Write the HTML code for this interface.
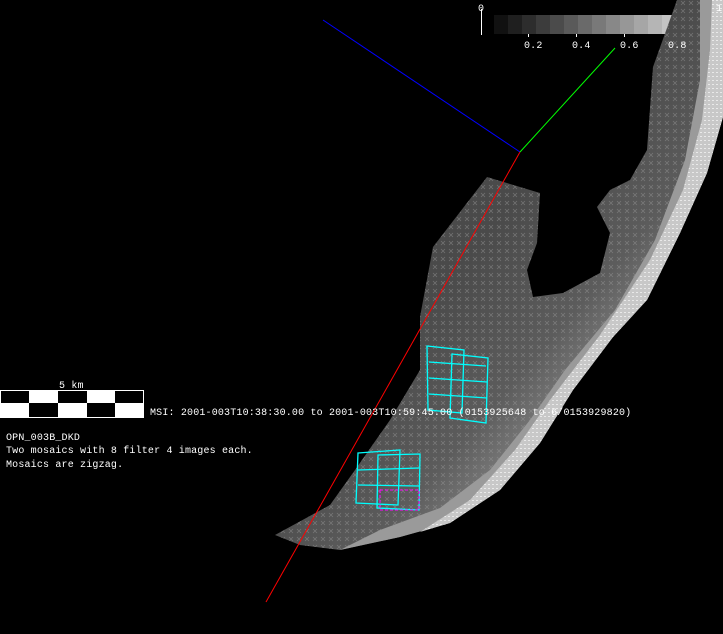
<!DOCTYPE html>
<html><head><style>
html,body{margin:0;padding:0;background:#000;width:723px;height:634px;overflow:hidden}
svg{position:absolute;left:0;top:0}
text{font-family:"Liberation Mono","DejaVu Sans Mono",monospace;fill:#fff;letter-spacing:0.17px}
</style></head><body>
<svg width="723" height="634" viewBox="0 0 723 634">
<defs>
<linearGradient id="ast" x1="470" y1="250" x2="620" y2="380" gradientUnits="userSpaceOnUse">
<stop offset="0" stop-color="#4a4a4a"/><stop offset="0.6" stop-color="#5c5c5c"/><stop offset="1" stop-color="#8a8a8a"/></linearGradient>
<pattern id="tex" width="8" height="8" patternUnits="userSpaceOnUse">
<path d="M1,1 L5,5 M5,1 L1,5" stroke="#9a9a9a" stroke-width="0.8" opacity="0.5"/>
</pattern>
<pattern id="tex2" width="4" height="4" patternUnits="userSpaceOnUse">
<rect x="0" y="0" width="2" height="1" fill="#fff" opacity="0.6"/>
</pattern>
</defs>
<g>
<rect x="494" y="15" width="14" height="19" fill="#111"/>
<rect x="508" y="15" width="14" height="19" fill="#1f1f1f"/>
<rect x="522" y="15" width="14" height="19" fill="#2d2d2d"/>
<rect x="536" y="15" width="14" height="19" fill="#3c3c3c"/>
<rect x="550" y="15" width="14" height="19" fill="#4b4b4b"/>
<rect x="564" y="15" width="14" height="19" fill="#5a5a5a"/>
<rect x="578" y="15" width="14" height="19" fill="#6a6a6a"/>
<rect x="592" y="15" width="14" height="19" fill="#797979"/>
<rect x="606" y="15" width="14" height="19" fill="#888"/>
<rect x="620" y="15" width="14" height="19" fill="#979797"/>
<rect x="634" y="15" width="14" height="19" fill="#a6a6a6"/>
<rect x="648" y="15" width="14" height="19" fill="#b5b5b5"/>
<rect x="662" y="15" width="14" height="19" fill="#c4c4c4"/>
<rect x="676" y="15" width="14" height="19" fill="#d3d3d3"/>
<rect x="690" y="15" width="14" height="19" fill="#e2e2e2"/>
<rect x="704" y="15" width="15" height="19" fill="#f0f0f0"/>
</g>
<line x1="481.5" y1="9" x2="481.5" y2="35" stroke="#fff"/>
<g stroke="#fff"><line x1="528.5" y1="34" x2="528.5" y2="37"/><line x1="576.5" y1="34" x2="576.5" y2="37"/><line x1="624.5" y1="34" x2="624.5" y2="37"/><line x1="672.5" y1="34" x2="672.5" y2="37"/></g>
<text x="478" y="11" font-size="10">0</text>
<text x="524" y="48" font-size="10">0.2</text>
<text x="572" y="48" font-size="10">0.4</text>
<text x="620" y="48" font-size="10">0.6</text>
<path d="M677,0 L723,0 L723,117 L707,173 L680,233 L647,300 L613,337 L573,390 L540,443 L500,490 L450,523 L400,537 L340,550 L300,545 L275,535 L330,505 L355,470 L390,420 L420,370 L420,317 L433,247 L487,177 L540,193 L537,243 L527,270 L533,297 L563,293 L600,273 L610,233 L597,207 L610,190 L630,180 L647,150 L653,67 Z" fill="url(#ast)"/>
<path d="M677,0 L723,0 L723,117 L707,173 L680,233 L647,300 L613,337 L573,390 L540,443 L500,490 L450,523 L400,537 L340,550 L300,545 L275,535 L330,505 L355,470 L390,420 L420,370 L420,317 L433,247 L487,177 L540,193 L537,243 L527,270 L533,297 L563,293 L600,273 L610,233 L597,207 L610,190 L630,180 L647,150 L653,67 Z" fill="url(#tex)"/>
<path d="M700,0 L723,0 L723,117 L707,173 L680,233 L647,300 L613,337 L573,390 L540,443 L500,490 L450,523 L400,537 L340,550 L380,530 L440,508 L490,470 L530,420 L565,370 L615,310 L655,240 L685,160 L700,80 Z" fill="#9a9a9a"/>
<path d="M712,0 L723,0 L723,117 L707,173 L680,233 L647,300 L613,337 L573,390 L540,443 L500,490 L450,523 L420,532 L470,500 L515,450 L550,400 L600,335 L650,260 L683,190 L702,120 L710,50 Z" fill="#c8c8c8"/>
<path d="M712,0 L723,0 L723,117 L707,173 L680,233 L647,300 L613,337 L573,390 L540,443 L500,490 L450,523 L420,532 L470,500 L515,450 L550,400 L600,335 L650,260 L683,190 L702,120 L710,50 Z" fill="url(#tex2)"/>
<text x="668" y="48" font-size="10">0.8</text>
<text x="716" y="11" font-size="10">1</text>
<line x1="323" y1="20" x2="520" y2="152" stroke="#0000ff"/>
<line x1="520" y1="152" x2="615" y2="48" stroke="#00ff00"/>
<line x1="520" y1="152" x2="266" y2="602" stroke="#ff0000"/>
<g stroke="#00ffff" fill="none" stroke-width="1.3">
<path d="M427,346 L464,350 L462,413 L428,410 Z"/>
<path d="M452,354 L488,358 L486,423 L450,418 Z"/>
<path d="M429,362 L486,366 M429,378 L487,382 M429,394 L487,398"/>
<path d="M358,453 L400,450 L398,505 L356,503 Z"/>
<path d="M378,455 L420,454 L419,510 L377,508 Z"/>
<path d="M358,470 L419,468 M358,485 L419,486"/>
</g>
<path d="M380,490 L419,490 L419,510 L380,510 Z" fill="none" stroke="#ff00ff" stroke-dasharray="3,2"/>
<rect x="0" y="390" width="144" height="28" fill="#fff"/>
<g fill="#000">
<rect x="1" y="391" width="28" height="12"/><rect x="58" y="391" width="29" height="12"/><rect x="115" y="391" width="28" height="12"/>
<rect x="29" y="403" width="29" height="14"/><rect x="87" y="403" width="28" height="14"/>
</g>
<text x="59" y="388" font-size="10">5 km</text>
<text x="150" y="415" font-size="10">MSI:  2001-003T10:38:30.00 to 2001-003T10:59:45.00 (0153925648 to 6/0153929820)</text>
<text x="6" y="440" font-size="10">OPN_003B_DKD</text>
<text x="6" y="453" font-size="10">Two mosaics with 8 filter 4 images each.</text>
<text x="6" y="467" font-size="10">Mosaics are zigzag.</text>
</svg>
</body></html>
